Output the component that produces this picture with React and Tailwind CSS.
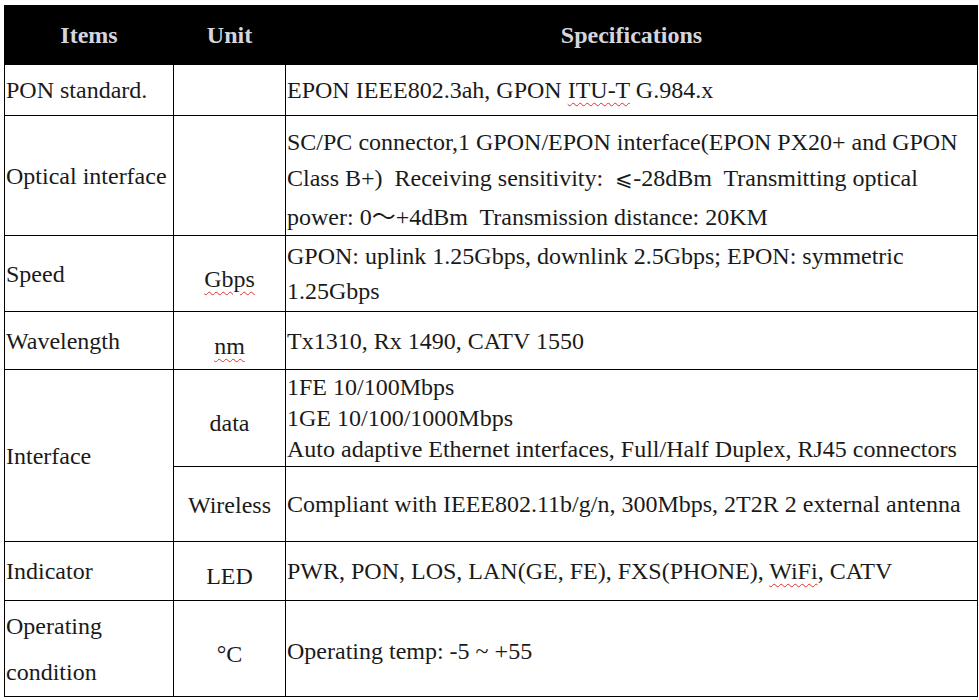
import React from "react";

const squiggle = "underline decoration-wavy decoration-[#e03030] decoration-1 underline-offset-[4px]";

function Cell({ children, className = "", ...rest }) {
  return (
    <td {...rest} className={"border border-black px-[1px] align-middle " + className}>
      {children}
    </td>
  );
}

export default function App() {
  return (
    <div className="bg-white min-h-[700px] pt-[5px] pl-[4px] text-[24px] text-[#1a1a1a]" style={{ fontFamily: '"Liberation Serif", "Times New Roman", serif' }}>
      <table className="table-fixed border-collapse w-[973px]">
        <colgroup>
          <col className="w-[169px]" />
          <col className="w-[112px]" />
          <col className="w-[692px]" />
        </colgroup>
        <thead>
          <tr className="bg-black text-[#d4d5dd] font-bold">
            <th className="h-[59px] border border-black text-center">Items</th>
            <th className="h-[59px] border border-black text-center">Unit</th>
            <th className="h-[59px] border border-black text-center">Specifications</th>
          </tr>
        </thead>
        <tbody className="leading-[28px]">
          <tr>
            <Cell className="h-[51px]">PON standard.</Cell>
            <Cell></Cell>
            <Cell>
              EPON IEEE802.3ah, GPON <span className={squiggle}>ITU-T</span> G.984.x
            </Cell>
          </tr>
          <tr>
            <Cell className="h-[119px]">Optical interface</Cell>
            <Cell></Cell>
            <Cell className="leading-[36px] pt-[8px] whitespace-pre">
              <div>SC/PC connector,1 GPON/EPON interface(EPON PX20+ and GPON</div>
              <div>
                Class B+)  Receiving sensitivity:  <span style={{ fontFamily: '"DejaVu Serif", serif' }} className="text-[21px]">⩽</span>-28dBm  Transmitting optical
              </div>
              <div>
                power: 0<span style={{ fontFamily: '"Noto Sans CJK SC", sans-serif' }}>～</span>+4dBm  Transmission distance: 20KM
              </div>
            </Cell>
          </tr>
          <tr>
            <Cell className="h-[76px]">Speed</Cell>
            <Cell className="text-center pt-[10px]">
              <span className={squiggle}>Gbps</span>
            </Cell>
            <Cell className="leading-[35px]">
              <div>GPON: uplink 1.25Gbps, downlink 2.5Gbps; EPON: symmetric</div>
              <div>1.25Gbps</div>
            </Cell>
          </tr>
          <tr>
            <Cell className="h-[58px]">Wavelength</Cell>
            <Cell className="text-center pt-[10px]">
              <span className={squiggle}>nm</span>
            </Cell>
            <Cell>Tx1310, Rx 1490, CATV 1550</Cell>
          </tr>
          <tr>
            <Cell rowSpan={2}>Interface</Cell>
            <Cell className="h-[97px] text-center pt-[10px]">data</Cell>
            <Cell className="leading-[31px]">
              <div>1FE 10/100Mbps</div>
              <div>1GE 10/100/1000Mbps</div>
              <div className="whitespace-nowrap">Auto adaptive Ethernet interfaces, Full/Half Duplex, RJ45 connectors</div>
            </Cell>
          </tr>
          <tr>
            <Cell className="h-[75px] text-center pt-[2px]">Wireless</Cell>
            <Cell className="whitespace-nowrap">Compliant with IEEE802.11b/g/n, 300Mbps, 2T2R 2 external antenna</Cell>
          </tr>
          <tr>
            <Cell className="h-[59px]">Indicator</Cell>
            <Cell className="text-center pt-[10px]">LED</Cell>
            <Cell>
              PWR, PON, LOS, LAN(GE, FE), FXS(PHONE), <span className={squiggle}>WiFi</span>, CATV
            </Cell>
          </tr>
          <tr>
            <Cell className="h-[96px] leading-[46px]">
              <div>Operating</div>
              <div>condition</div>
            </Cell>
            <Cell className="text-center pt-[10px]">°C</Cell>
            <Cell className="pt-[4px]">Operating temp: -5 ~ +55</Cell>
          </tr>
        </tbody>
      </table>
    </div>
  );
}
